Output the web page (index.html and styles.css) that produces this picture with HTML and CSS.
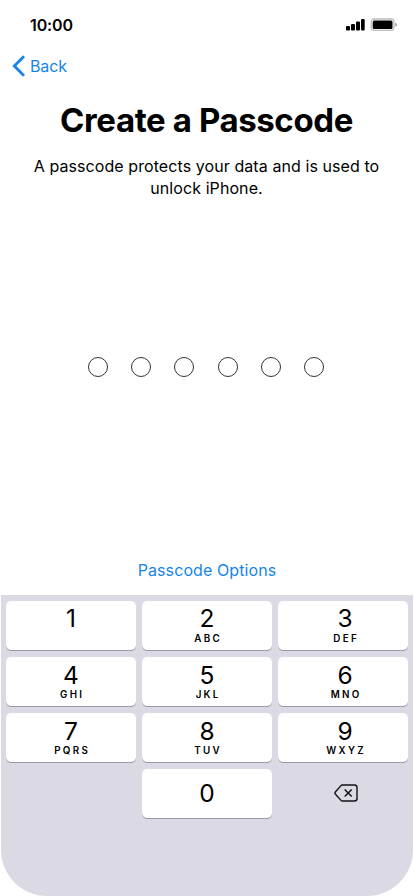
FILE: index.html
```html
<!DOCTYPE html>
<html lang="en">
<head>
<meta charset="utf-8">
<meta name="viewport" content="width=device-width, initial-scale=1">
<title>Create a Passcode</title>
<link rel="stylesheet" href="styles.css">
</head>
<body>
<div class="screen">
  <header class="status">
    <span class="time">10:00</span>
    <svg class="indicators" width="52" height="14" viewBox="0 0 52 14" aria-hidden="true">
      <rect x="0" y="8" width="4" height="4.500" rx="1"/>
      <rect x="5" y="6" width="4" height="6.500" rx="1"/>
      <rect x="10" y="3.500" width="4" height="9" rx="1"/>
      <rect x="15" y="1" width="3.700" height="11.500" rx="1"/>
      <rect x="25.200" y="1" width="22.800" height="11.300" rx="3" fill="#fff" stroke="#bdbdbd" stroke-width="1.300"/>
      <rect x="26.700" y="2.500" width="19.800" height="8.500" rx="1.500"/>
      <path d="M49.300 4.800Q51 5.300 51 6.700T49.300 8.600Z" fill="#999"/>
    </svg>
  </header>
  <nav class="nav">
    <svg width="13" height="22" viewBox="0 0 13 22" aria-hidden="true"><path d="M12 1.200 2.300 11l9.700 9.800" fill="none" stroke="#1685e8" stroke-width="2.800"/></svg>
    <span class="back">Back</span>
  </nav>
  <main class="content">
    <h1>Create a Passcode</h1>
    <p>A passcode protects your data and is used to<br>unlock iPhone.</p>
    <div class="dots"><i></i><i></i><i></i><i></i><i></i><i></i></div>
    <a class="options">Passcode Options</a>
  </main>
  <section class="keypad">
    <div class="key top"><b>1</b></div>
    <div class="key top"><b>2</b><small>ABC</small></div>
    <div class="key top right"><b>3</b><small>DEF</small></div>
    <div class="key"><b>4</b><small>GHI</small></div>
    <div class="key"><b>5</b><small>JKL</small></div>
    <div class="key right"><b>6</b><small>MNO</small></div>
    <div class="key"><b>7</b><small>PQRS</small></div>
    <div class="key"><b>8</b><small>TUV</small></div>
    <div class="key right"><b>9</b><small>WXYZ</small></div>
    <div></div>
    <div class="key zero"><b>0</b></div>
    <div class="delete">
      <svg width="24" height="18" viewBox="0 0 24 18" fill="none" stroke="#111118" stroke-width="1.400" stroke-linejoin="round" aria-hidden="true">
        <path d="M8.300 1H20.500Q23 1 23 3.500v11q0 2.500-2.500 2.500H8.300Q7.600 17 7 16.400L1.300 10Q.6 9 1.300 8L7 1.600Q7.600 1 8.300 1Z"/>
        <path d="m10.700 5.500 7 7m0-7-7 7" stroke-width="1.500"/>
      </svg>
    </div>
  </section>
</div>
</body>
</html>
```
FILE: styles.css
```css
* { box-sizing: border-box; }
body {
  margin: 0;
  background: #fff;
  color: #000;
  font-family: Inter, "Liberation Sans", sans-serif;
}
.screen {
  width: 414px;
  height: 896px;
  display: flex;
  flex-direction: column;
  overflow: hidden;
}
.status {
  height: 50px;
  padding: 0 16px 0 30px;
  display: flex;
  align-items: center;
  justify-content: space-between;
}
.time { font-size: 16px; font-weight: 600; line-height: 20px; letter-spacing: -0.1px; }
.indicators { display: block; }
.nav {
  height: 32px;
  padding-left: 12px;
  display: flex;
  align-items: center;
  gap: 5px;
  color: #1685e8;
}
.back { font-size: 16px; line-height: 20px; letter-spacing: -0.1px; }
.content {
  height: 513px;
  padding: 17px 1px 0 0;
  display: flex;
  flex-direction: column;
  align-items: center;
  text-align: center;
}
h1 {
  margin: 0;
  font-size: 33px;
  line-height: 42px;
  font-weight: 700;
  letter-spacing: -0.4px;
  white-space: nowrap;
}
p {
  margin: 14px 0 0;
  font-size: 16px;
  line-height: 22px;
  letter-spacing: 0.08px;
  white-space: nowrap;
}
.dots {
  margin: 158px 1px 0 0;
  width: 236px;
  display: flex;
  justify-content: space-between;
}
.dots i {
  width: 20px;
  height: 20px;
  border: 1.5px solid #333;
  border-radius: 50%;
}
.options {
  margin: 182px 0 0 1px;
  color: #1685e8;
  font-size: 16px;
  line-height: 22px;
  letter-spacing: 0.1px;
}
.keypad {
  height: 301px;
  margin: 0 1px;
  padding: 6px 5px;
  background: #dbdae4;
  border-radius: 0 0 46px 46px;
  display: grid;
  grid-template-columns: repeat(3, 130px);
  grid-auto-rows: 49px;
  align-content: start;
  gap: 7px 6px;
}
.key {
  padding-top: 4px;
  background: #fff;
  border-radius: 5px;
  box-shadow: 0 1px 0 #9b9aa2;
  display: flex;
  flex-direction: column;
  align-items: center;
}
.key b { font-size: 24.5px; line-height: 29px; font-weight: 400; }
.key small {
  margin: -1px -2.3px 0 0;
  font-size: 9.8px;
  line-height: 12px;
  font-weight: 600;
  letter-spacing: 2.3px;
}
.top { padding-top: 3px; }
.top small { margin-top: 0; }
.right { padding-left: 4px; }
.zero { padding-top: 10px; }
.delete {
  display: flex;
  align-items: center;
  justify-content: center;
  padding: 0 0 2px 5px;
}
```
